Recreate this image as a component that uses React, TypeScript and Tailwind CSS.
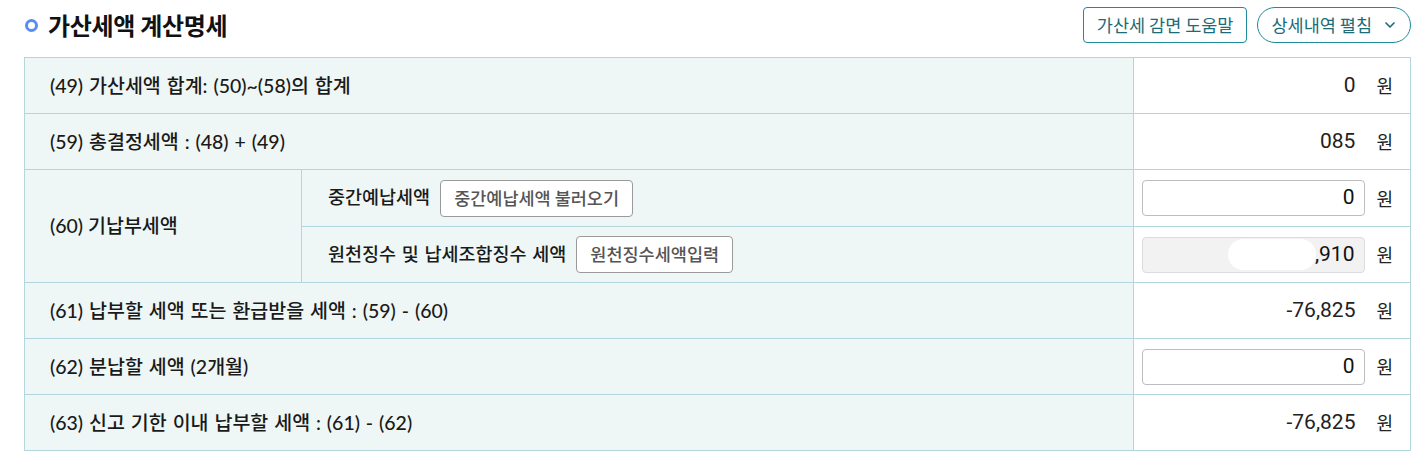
import { ChevronDown } from 'lucide-react';

const labelFont = "font-['Lato','Noto_Sans_CJK_KR',sans-serif]";
const valueFont = "font-['Roboto','Noto_Sans_CJK_KR',sans-serif]";
const krFont = "font-['Noto_Sans_CJK_KR',sans-serif]";

interface ValueCellProps {
  value: string;
  input?: boolean;
  disabled?: boolean;
  masked?: boolean;
}

const ValueCell = ({ value, input, disabled, masked }: ValueCellProps) => {
  return (
    <div className="flex items-center h-full pl-[8px] pr-[17px] bg-white border-r border-b border-[#b3d5dc]">
      <div className="flex-1">
        {input ? (
          <div
            className={
              disabled
                ? 'relative h-[36px] flex items-center justify-end pr-[10px] rounded-[4px] border border-[#dcdcdc] bg-[#f2f2f2]'
                : 'relative h-[36px] flex items-center justify-end pr-[10px] rounded-[4px] border border-[#bdbdbd] bg-white'
            }
          >
            <span className={`${valueFont} text-[21px] text-[#111]`}>{value}</span>
            {masked && (
              <span className="absolute left-[85px] top-[1px] w-[88px] h-[31px] rounded-full bg-white" />
            )}
          </div>
        ) : (
          <div className={`${valueFont} text-right pr-[10px] text-[21px] text-[#222]`}>{value}</div>
        )}
      </div>
      <span className={`${krFont} ml-[11px] text-[18px] text-[#222]`}>원</span>
    </div>
  );
};

const LabelCell = ({ children, span }: { children: React.ReactNode; span?: boolean }) => {
  return (
    <div
      className={`${span ? 'col-span-2' : ''} flex items-center h-full pl-[25px] bg-[#eef7f6] border-r border-b border-[#b3d5dc] ${labelFont} font-medium text-[19.5px] text-[#1a1a1a] [word-spacing:1px]`}
    >
      {children}
    </div>
  );
};

const SubButton = ({ children }: { children: React.ReactNode }) => (
  <button
    type="button"
    className={`ml-[10px] h-[37px] px-[13px] rounded-[4px] border border-[#9a9a9a] bg-white text-[17.5px] text-[#555] ${krFont}`}
  >
    {children}
  </button>
);

export default function App() {
  return (
    <div className="w-[1425px] h-[457px] bg-white pl-[24px] pr-[14px]">
      <div className="flex items-center justify-between h-[50px]">
        <div className="flex items-center">
          <span className="ml-[1px] w-[13px] h-[13px] rounded-full border-[3px] border-[#5b8def]" />
          <h2 className={`ml-[10px] ${krFont} font-bold text-[24px] text-[#111] tracking-[-0.3px]`}>
            가산세액 계산명세
          </h2>
        </div>
        <div className="flex items-center gap-[10px]">
          <button
            type="button"
            className={`h-[36px] px-[13px] rounded-[4px] border border-[#1f8a99] bg-white text-[17.5px] text-[#1b6b78] ${krFont}`}
          >
            가산세 감면 도움말
          </button>
          <button
            type="button"
            className={`flex items-center h-[36px] pl-[13px] pr-[12px] rounded-full border border-[#1f8a99] bg-white text-[17.5px] text-[#1b6b78] ${krFont}`}
          >
            상세내역 펼침
            <ChevronDown className="ml-[10px] w-[16px] h-[16px]" strokeWidth={2.5} />
          </button>
        </div>
      </div>

      <div className="mt-[7px] grid grid-cols-[277px_832px_1fr] grid-rows-[56px_56px_57px_56px_56px_56px_56px] border-l border-t border-[#b3d5dc]">
        <LabelCell span>(49) 가산세액 합계: (50)~(58)의 합계</LabelCell>
        <ValueCell value="0" />

        <LabelCell span>(59) 총결정세액 : (48) + (49)</LabelCell>
        <ValueCell value="085" />

        <div className={`row-span-2 flex items-center pl-[25px] bg-[#eef7f6] border-r border-b border-[#b3d5dc] ${labelFont} font-medium text-[19.5px] text-[#1a1a1a]`}>
          (60) 기납부세액
        </div>
        <div className={`flex items-center pl-[26px] bg-[#eef7f6] border-r border-b border-[#b3d5dc] ${labelFont} font-medium text-[18.5px] text-[#1a1a1a]`}>
          중간예납세액
          <SubButton>중간예납세액 불러오기</SubButton>
        </div>
        <ValueCell value="0" input />
        <div className={`flex items-center pl-[26px] bg-[#eef7f6] border-r border-b border-[#b3d5dc] ${labelFont} font-medium text-[18.5px] text-[#1a1a1a] [word-spacing:1px]`}>
          원천징수 및 납세조합징수 세액
          <SubButton>원천징수세액입력</SubButton>
        </div>
        <ValueCell value=",910" input disabled masked />

        <LabelCell span>(61) 납부할 세액 또는 환급받을 세액 : (59) - (60)</LabelCell>
        <ValueCell value="-76,825" />

        <LabelCell span>(62) 분납할 세액 (2개월)</LabelCell>
        <ValueCell value="0" input />

        <LabelCell span>(63) 신고 기한 이내 납부할 세액 : (61) - (62)</LabelCell>
        <ValueCell value="-76,825" />
      </div>
    </div>
  );
}
